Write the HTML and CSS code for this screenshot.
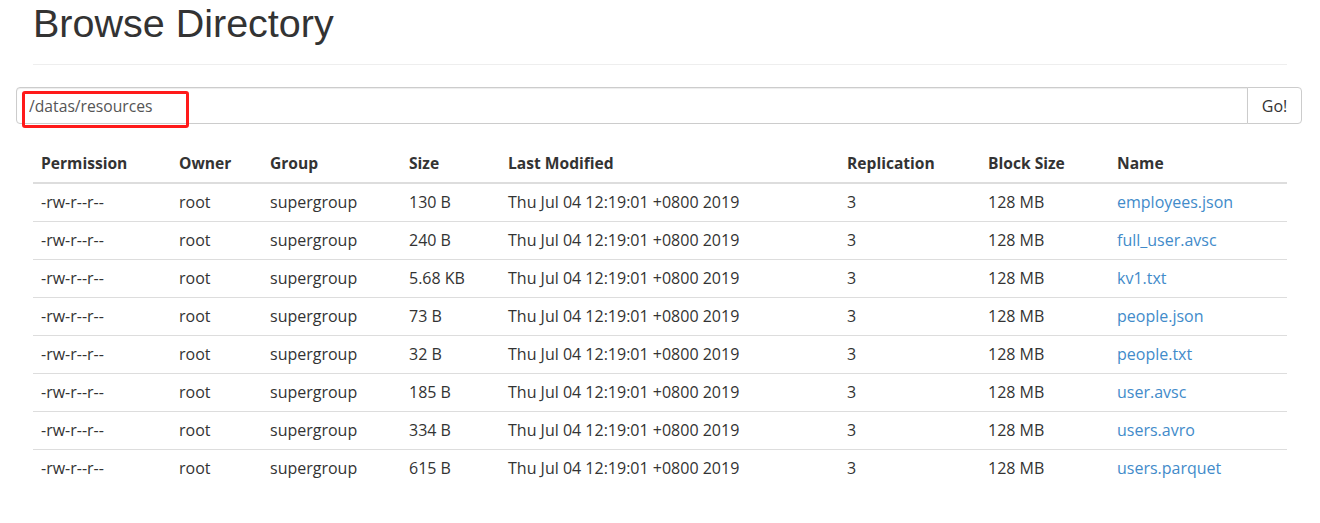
FILE: index.html
```html
<!DOCTYPE html>
<html lang="en">
<head>
<meta charset="utf-8">
<title>Browse Directory</title>
<link rel="stylesheet" href="styles.css">
</head>
<body>
<div class="page">
  <div class="page-header">
    <h1>Browse Directory</h1>
  </div>
  <form class="input-group">
    <input class="form-control" type="text" value="/datas/resources">
    <button class="btn" type="button">Go!</button>
  </form>
  <table class="table">
    <colgroup>
      <col class="c-perm"><col class="c-owner"><col class="c-group"><col class="c-size">
      <col class="c-mod"><col class="c-repl"><col class="c-block"><col class="c-name">
    </colgroup>
    <thead>
      <tr>
        <th>Permission</th><th>Owner</th><th>Group</th><th>Size</th>
        <th>Last Modified</th><th>Replication</th><th>Block Size</th><th>Name</th>
      </tr>
    </thead>
    <tbody>
      <tr><td>-rw-r--r--</td><td>root</td><td>supergroup</td><td>130 B</td><td>Thu Jul 04 12:19:01 +0800 2019</td><td>3</td><td>128 MB</td><td><a href="#">employees.json</a></td></tr>
      <tr><td>-rw-r--r--</td><td>root</td><td>supergroup</td><td>240 B</td><td>Thu Jul 04 12:19:01 +0800 2019</td><td>3</td><td>128 MB</td><td><a href="#">full_user.avsc</a></td></tr>
      <tr><td>-rw-r--r--</td><td>root</td><td>supergroup</td><td>5.68 KB</td><td>Thu Jul 04 12:19:01 +0800 2019</td><td>3</td><td>128 MB</td><td><a href="#">kv1.txt</a></td></tr>
      <tr><td>-rw-r--r--</td><td>root</td><td>supergroup</td><td>73 B</td><td>Thu Jul 04 12:19:01 +0800 2019</td><td>3</td><td>128 MB</td><td><a href="#">people.json</a></td></tr>
      <tr><td>-rw-r--r--</td><td>root</td><td>supergroup</td><td>32 B</td><td>Thu Jul 04 12:19:01 +0800 2019</td><td>3</td><td>128 MB</td><td><a href="#">people.txt</a></td></tr>
      <tr><td>-rw-r--r--</td><td>root</td><td>supergroup</td><td>185 B</td><td>Thu Jul 04 12:19:01 +0800 2019</td><td>3</td><td>128 MB</td><td><a href="#">user.avsc</a></td></tr>
      <tr><td>-rw-r--r--</td><td>root</td><td>supergroup</td><td>334 B</td><td>Thu Jul 04 12:19:01 +0800 2019</td><td>3</td><td>128 MB</td><td><a href="#">users.avro</a></td></tr>
      <tr><td>-rw-r--r--</td><td>root</td><td>supergroup</td><td>615 B</td><td>Thu Jul 04 12:19:01 +0800 2019</td><td>3</td><td>128 MB</td><td><a href="#">users.parquet</a></td></tr>
    </tbody>
  </table>
</div>
<div class="annotation"></div>
</body>
</html>
```

FILE: styles.css
```css
* { box-sizing: border-box; }

html, body {
  margin: 0;
  padding: 0;
  background: #fff;
}

body {
  font-family: "Open Sans", "Noto Sans", sans-serif;
  font-size: 16px;
  line-height: 21px;
  color: #333;
  position: relative;
}

.page {
  padding: 3px 33px 0 33px;
}

.page-header {
  padding-bottom: 11px;
  border-bottom: 1px solid #eee;
}

.page-header h1 {
  margin: 0 0 10px 0;
  font-family: "Liberation Sans", Arial, sans-serif;
  font-weight: 400;
  font-size: 39.5px;
  line-height: 40px;
  color: #333;
}

.input-group {
  display: flex;
  margin: 22px -15px 0 -17px;
  height: 37px;
}

.form-control {
  flex: 1;
  min-width: 0;
  height: 37px;
  margin: 0;
  padding: 0 12px;
  border: 1px solid #ccc;
  border-radius: 4px 0 0 4px;
  font-family: "Open Sans", "Noto Sans", sans-serif;
  font-size: 15.7px;
  color: #555;
  background: #fff;
  box-shadow: inset 0 1px 1px rgba(0,0,0,0.075);
  outline: none;
}

.btn {
  width: 55px;
  height: 37px;
  margin: 0 0 0 -1px;
  padding: 0;
  border: 1px solid #ccc;
  border-radius: 0 4px 4px 0;
  background: #fff;
  font-family: "Open Sans", "Noto Sans", sans-serif;
  font-size: 16px;
  color: #333;
}

.table {
  width: 100%;
  margin-top: 21px;
  border-collapse: collapse;
  border-spacing: 0;
  table-layout: fixed;
}

.c-perm { width: 138px; }
.c-owner { width: 91px; }
.c-group { width: 139px; }
.c-size { width: 99px; }
.c-mod { width: 339px; }
.c-repl { width: 141px; }
.c-block { width: 129px; }
.c-name { width: 178px; }

.table th,
.table td {
  padding: 8px 8px;
  text-align: left;
  white-space: nowrap;
}

.table th {
  font-weight: 700;
  font-size: 15.6px;
  vertical-align: bottom;
  border-bottom: 2px solid #ddd;
}

.table td {
  border-top: 1px solid #ddd;
  vertical-align: top;
}

.table a {
  color: #428bca;
  text-decoration: none;
}

.annotation {
  position: absolute;
  left: 22px;
  top: 91px;
  width: 167px;
  height: 37px;
  border: 3px solid #ff1a1a;
  border-radius: 3px;
  pointer-events: none;
}
```
